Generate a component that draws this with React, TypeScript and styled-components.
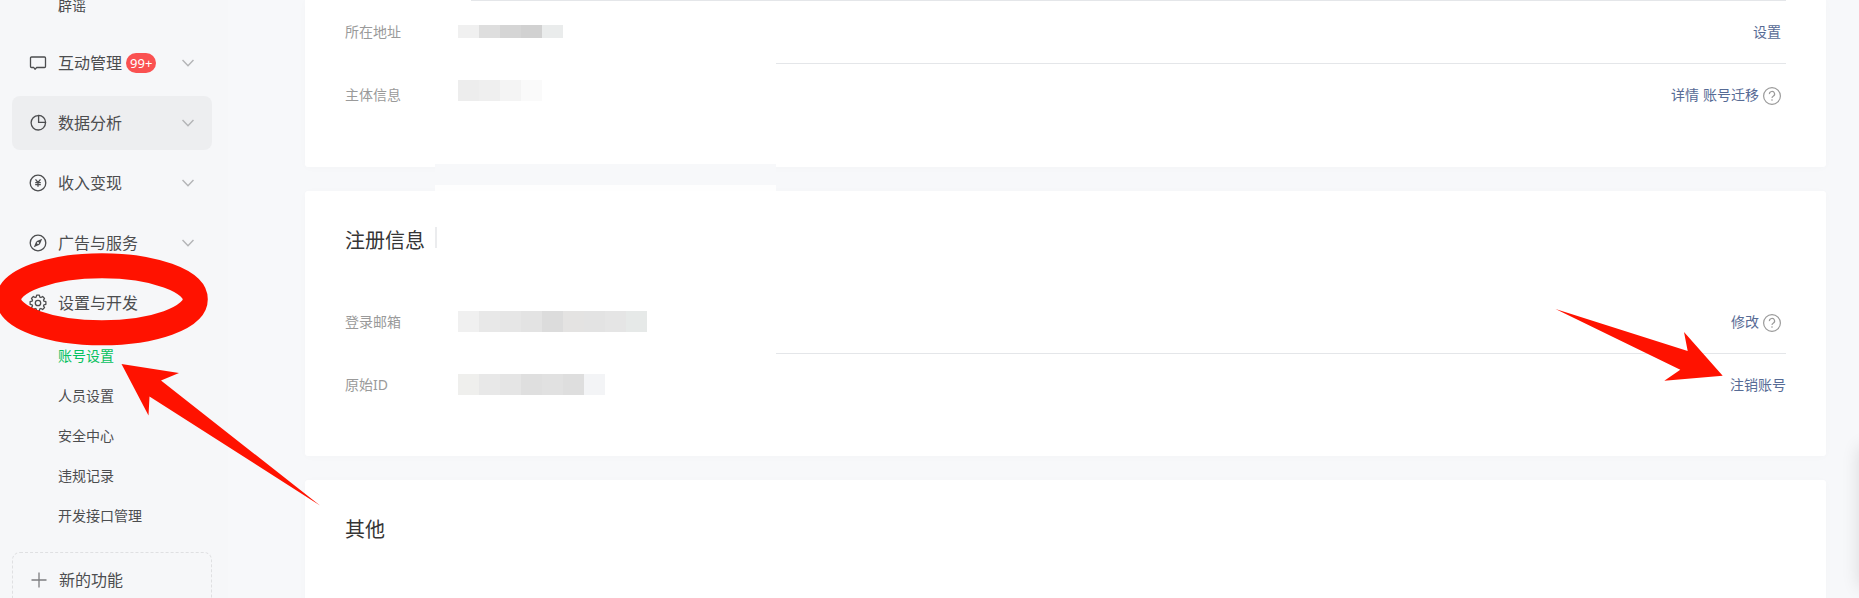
import React from "react";
import styled, { createGlobalStyle } from "styled-components";

const GlobalStyle = createGlobalStyle`
  *, *::before, *::after { box-sizing: border-box; }
  body {
    margin: 0;
    background: #f6f7f9;
    color: #353535;
    font-family: "Noto Sans", "Noto Sans CJK SC", sans-serif;
    font-size: 14px;
    line-height: 20px;
  }
  button {
    border: 0;
    background: none;
    padding: 0;
    font: inherit;
    color: inherit;
    text-align: left;
    cursor: pointer;
  }
  a { text-decoration: none; }
  ul { list-style: none; margin: 0; padding: 0; }
`;

const Page = styled.div`
  position: relative;
  display: flex;
  height: 100vh;
  overflow: hidden;
`;

const Sidebar = styled.nav`
  flex: 0 0 228px;
  display: flex;
  flex-direction: column;
  margin-top: -14px;
  padding: 0 16px 0 12px;
`;

const SubList = styled.ul`
  margin-bottom: 10px;
`;

const SubLink = styled.a<{ $active?: boolean }>`
  display: block;
  padding-left: 46px;
  line-height: 40px;
  color: ${(p) => (p.$active ? "#07c160" : "#4c4d4f")};
`;

const MenuButton = styled.button<{ $hover?: boolean }>`
  display: flex;
  align-items: center;
  height: 54px;
  flex-shrink: 0;
  margin-bottom: 6px;
  padding: 0 18px 0 17px;
  border-radius: 8px;
  background: ${(p) => (p.$hover ? "#edeef0" : "transparent")};
  color: #4c4d4f;
  font-size: 16px;

  svg { flex-shrink: 0; }
`;

const MenuLabel = styled.span`
  margin-left: 11px;
`;

const Badge = styled.span`
  margin-left: 4px;
  padding: 0 4px;
  border-radius: 10px;
  background: #fa5151;
  color: #fff;
  font-size: 13px;
  line-height: 20px;
`;

const Chevron = styled.svg`
  margin-left: auto;
`;

const NewFeature = styled(MenuButton)`
  height: 56px;
  margin-top: 6px;
  border: 1px dashed #dfe0e2;
`;

const Main = styled.main`
  flex: 1;
  min-width: 0;
  display: flex;
  flex-direction: column;
  gap: 24px;
  padding: 0 33px 0 77px;
  background: #f7f8fa;
`;

const Card = styled.section<{ $grow?: boolean; $clipped?: boolean }>`
  flex: ${(p) => (p.$grow ? "1 0 auto" : "0 0 auto")};
  padding: 0 40px 40px;
  border-radius: ${(p) => (p.$clipped ? "0 0 3px 3px" : "3px")};
  background: #fff;
  box-shadow: 0 1px 8px rgba(0, 0, 0, 0.02);
`;

const CardTitle = styled.h2`
  margin: 0;
  padding: 36px 0;
  font-size: 20px;
  font-weight: 400;
  line-height: 28px;
`;

const Divider = styled.div<{ $inset?: number }>`
  height: 1px;
  margin-left: ${(p) => p.$inset ?? 431}px;
  background: #e4e6e9;
`;

const Row = styled.div<{ $tall?: boolean }>`
  display: flex;
  align-items: center;
  height: ${(p) => (p.$tall ? 63 : 62)}px;
  padding-bottom: ${(p) => (p.$tall ? 1 : 0)}px;
`;

const RowLabel = styled.span`
  width: 113px;
  color: #9a9a9a;
`;

const Mosaic = styled.span<{ $short?: boolean; $raised?: boolean }>`
  display: flex;
  height: ${(p) => (p.$short ? 13 : 21)}px;
  margin-bottom: ${(p) => (p.$raised ? 9 : 1)}px;
`;

const Tile = styled.span<{ $tone: string }>`
  width: 21px;
  background: ${(p) => p.$tone};
`;

const Actions = styled.div<{ $flush?: boolean }>`
  display: flex;
  align-items: center;
  gap: 4px;
  margin-left: auto;
  padding-right: ${(p) => (p.$flush ? 0 : 5)}px;
`;

const ActionLink = styled.a`
  color: #576b95;
`;

const HelpButton = styled.button`
  display: flex;
  padding-top: 2px;
`;

const GapPatch = styled.div`
  position: absolute;
  left: 435px;
  top: 164px;
  width: 341px;
  height: 27px;
  border-bottom: 6px solid #fefefe;
  background: #f7f8fa;
`;

const TitleMark = styled.div`
  position: absolute;
  left: 435px;
  top: 227px;
  width: 2px;
  height: 21px;
  background: #ebecee;
`;

const EdgePanel = styled.div`
  position: absolute;
  right: -40px;
  top: 446px;
  width: 40px;
  height: 142px;
  border-radius: 6px;
  background: #fff;
  box-shadow: 0 0 18px rgba(0, 0, 0, 0.12);
`;

const LeftMarks = styled.svg`
  position: absolute;
  left: 0;
  top: 0;
  pointer-events: none;
`;

const RightMarks = styled.svg`
  position: absolute;
  right: 0;
  top: 0;
  pointer-events: none;
`;

const MARK_RED = "#ff1200";

function Icon({ children }: { children: React.ReactNode }) {
  return (
    <svg width="18" height="18" viewBox="0 0 18 18" fill="none" stroke="#4c4d4f" strokeWidth="1.3" aria-hidden="true">
      {children}
    </svg>
  );
}

const ChatIcon = () => (
  <Icon>
    <path d="M2.500 3h13a1 1 0 0 1 1 1v8.500a1 1 0 0 1-1 1H7.700L6 15.200 4.800 13.500H2.500a1 1 0 0 1-1-1V4a1 1 0 0 1 1-1z" strokeLinejoin="round" />
  </Icon>
);

const PieIcon = () => (
  <Icon>
    <path d="M9.200 1.600A7.200 7.200 0 1 0 16.500 8.800" />
    <path d="M9.600 1.400v7h7a7 7 0 0 0-7-7z" />
  </Icon>
);

const YuanIcon = () => (
  <Icon>
    <circle cx="9" cy="9" r="7.800" />
    <path d="M6.500 5.400L9 8.400l2.500-3M9 8.400v4.400M6.200 8.600h5.600M6.200 10.700h5.600" />
  </Icon>
);

const CompassIcon = () => (
  <Icon>
    <circle cx="9" cy="9" r="7.800" />
    <path d="M13.200 4.800L10.700 10.700 7.300 7.300z" fill="#4c4d4f" stroke="none" />
    <path d="M4.800 13.200L7.200 7.500 10.500 10.800z" fill="#4c4d4f" stroke="none" />
    <circle cx="9" cy="9" r="1" fill="#f6f7f9" stroke="none" />
  </Icon>
);

function gearPath() {
  const points: string[] = [];
  const teeth = 8;
  const step = (Math.PI * 2) / teeth;
  for (let i = 0; i < teeth; i++) {
    const a = i * step - Math.PI / 2;
    [
      [-0.3, 6.2],
      [-0.17, 8],
      [0.17, 8],
      [0.3, 6.2],
    ].forEach(([offset, r]) => {
      points.push(`${(9 + r * Math.cos(a + offset)).toFixed(2)} ${(9 + r * Math.sin(a + offset)).toFixed(2)}`);
    });
  }
  return `M${points.join("L")}Z`;
}

const GearIcon = () => (
  <Icon>
    <path d={gearPath()} strokeLinejoin="round" />
    <circle cx="9" cy="9" r="2.700" />
  </Icon>
);

const PlusIcon = () => (
  <Icon>
    <path d="M9 1.500v15M1.500 9h15" stroke="#7d7e80" />
  </Icon>
);

const DownChevron = () => (
  <Chevron width="12" height="8" viewBox="0 0 12 8" fill="none" stroke="#b4b5b7" strokeWidth="1.500" aria-hidden="true">
    <path d="M0.500 1L6 6.700 11.500 1" />
  </Chevron>
);

const Help = () => (
  <HelpButton type="button" aria-label="帮助">
    <svg width="18" height="18" viewBox="0 0 18 18" fill="none" stroke="#9a9a9a" strokeWidth="1.200" aria-hidden="true">
      <circle cx="9" cy="9" r="8.400" />
      <path d="M6.400 7.100A2.600 2.500 0 1 1 10.200 9.200Q9 9.900 9 11.100" />
      <circle cx="9" cy="13" r="0.800" fill="#9a9a9a" stroke="none" />
    </svg>
  </HelpButton>
);

interface MenuEntryProps {
  icon: React.ReactNode;
  label: string;
  badge?: string;
  hover?: boolean;
  open?: boolean;
}

function MenuEntry({ icon, label, badge, hover, open }: MenuEntryProps) {
  return (
    <MenuButton type="button" $hover={hover} aria-expanded={!!open}>
      {icon}
      <MenuLabel>{label}</MenuLabel>
      {badge && <Badge>{badge}</Badge>}
      {!open && <DownChevron />}
    </MenuButton>
  );
}

interface FieldProps {
  label: string;
  tones: string[];
  links: string[];
  help?: boolean;
  short?: boolean;
  raised?: boolean;
  tall?: boolean;
  flush?: boolean;
}

function Field({ label, tones, links, help, short, raised, tall, flush }: FieldProps) {
  return (
    <Row $tall={tall}>
      <RowLabel>{label}</RowLabel>
      <Mosaic $short={short} $raised={raised}>
        {tones.map((tone, i) => (
          <Tile key={i} $tone={tone} />
        ))}
      </Mosaic>
      <Actions $flush={flush}>
        {links.map((text) => (
          <ActionLink key={text} href="#">
            {text}
          </ActionLink>
        ))}
        {help && <Help />}
      </Actions>
    </Row>
  );
}

const SETTINGS = ["账号设置", "人员设置", "安全中心", "违规记录", "开发接口管理"];

export default function App() {
  return (
    <>
      <GlobalStyle />
      <Page>
        <Sidebar>
          <SubList>
            <li>
              <SubLink href="#">辟谣</SubLink>
            </li>
          </SubList>
          <MenuEntry icon={<ChatIcon />} label="互动管理" badge="99+" />
          <MenuEntry icon={<PieIcon />} label="数据分析" hover />
          <MenuEntry icon={<YuanIcon />} label="收入变现" />
          <MenuEntry icon={<CompassIcon />} label="广告与服务" />
          <MenuEntry icon={<GearIcon />} label="设置与开发" open />
          <SubList>
            {SETTINGS.map((text, i) => (
              <li key={text}>
                <SubLink href="#" $active={i === 0}>
                  {text}
                </SubLink>
              </li>
            ))}
          </SubList>
          <NewFeature type="button">
            <PlusIcon />
            <MenuLabel>新的功能</MenuLabel>
          </NewFeature>
        </Sidebar>

        <Main>
          <Card $clipped>
            <Divider $inset={126} />
            <Field label="所在地址" short tones={["#f0f0f0", "#dedede", "#d5d5d5", "#d1d1d1", "#eaecec"]} links={["设置"]} />
            <Divider />
            <Field
              label="主体信息"
              tall
              raised
              tones={["#ededed", "#efefef", "#f4f4f4", "#fafafa"]}
              links={["详情", "账号迁移"]}
              help
            />
          </Card>

          <Card>
            <CardTitle>注册信息</CardTitle>
            <Field
              label="登录邮箱"
              tones={["#f0f0f0", "#e8e8e8", "#e6e6e6", "#e3e3e3", "#dcdcdc", "#e4e3e2", "#e3e3e3", "#e5e5e5", "#e6e9e8"]}
              links={["修改"]}
              help
            />
            <Divider />
            <Field
              label="原始ID"
              tones={["#efefed", "#e8e8e8", "#e5e5e5", "#dfdfdf", "#e1e1e1", "#dedede", "#f3f4f6"]}
              links={["注销账号"]}
              flush
            />
          </Card>

          <Card $grow>
            <CardTitle>其他</CardTitle>
          </Card>
        </Main>

        <GapPatch />
        <TitleMark />
        <EdgePanel />

        <LeftMarks width="330" height="520" viewBox="0 0 330 520" aria-hidden="true">
          <ellipse cx="102" cy="299.300" rx="93.300" ry="33.500" fill="none" stroke={MARK_RED} strokeWidth="25" />
          <path d="M121.500 364L179 373 161 380.500 320 505.500 149.500 396.500 148.500 415.500Z" fill={MARK_RED} />
        </LeftMarks>
        <RightMarks width="319" height="400" viewBox="0 0 319 400" aria-hidden="true">
          <path d="M15.500 309L147.700 351 144 332 182.700 375.700 124.300 380.700 140.300 369.700Z" fill={MARK_RED} />
        </RightMarks>
      </Page>
    </>
  );
}
